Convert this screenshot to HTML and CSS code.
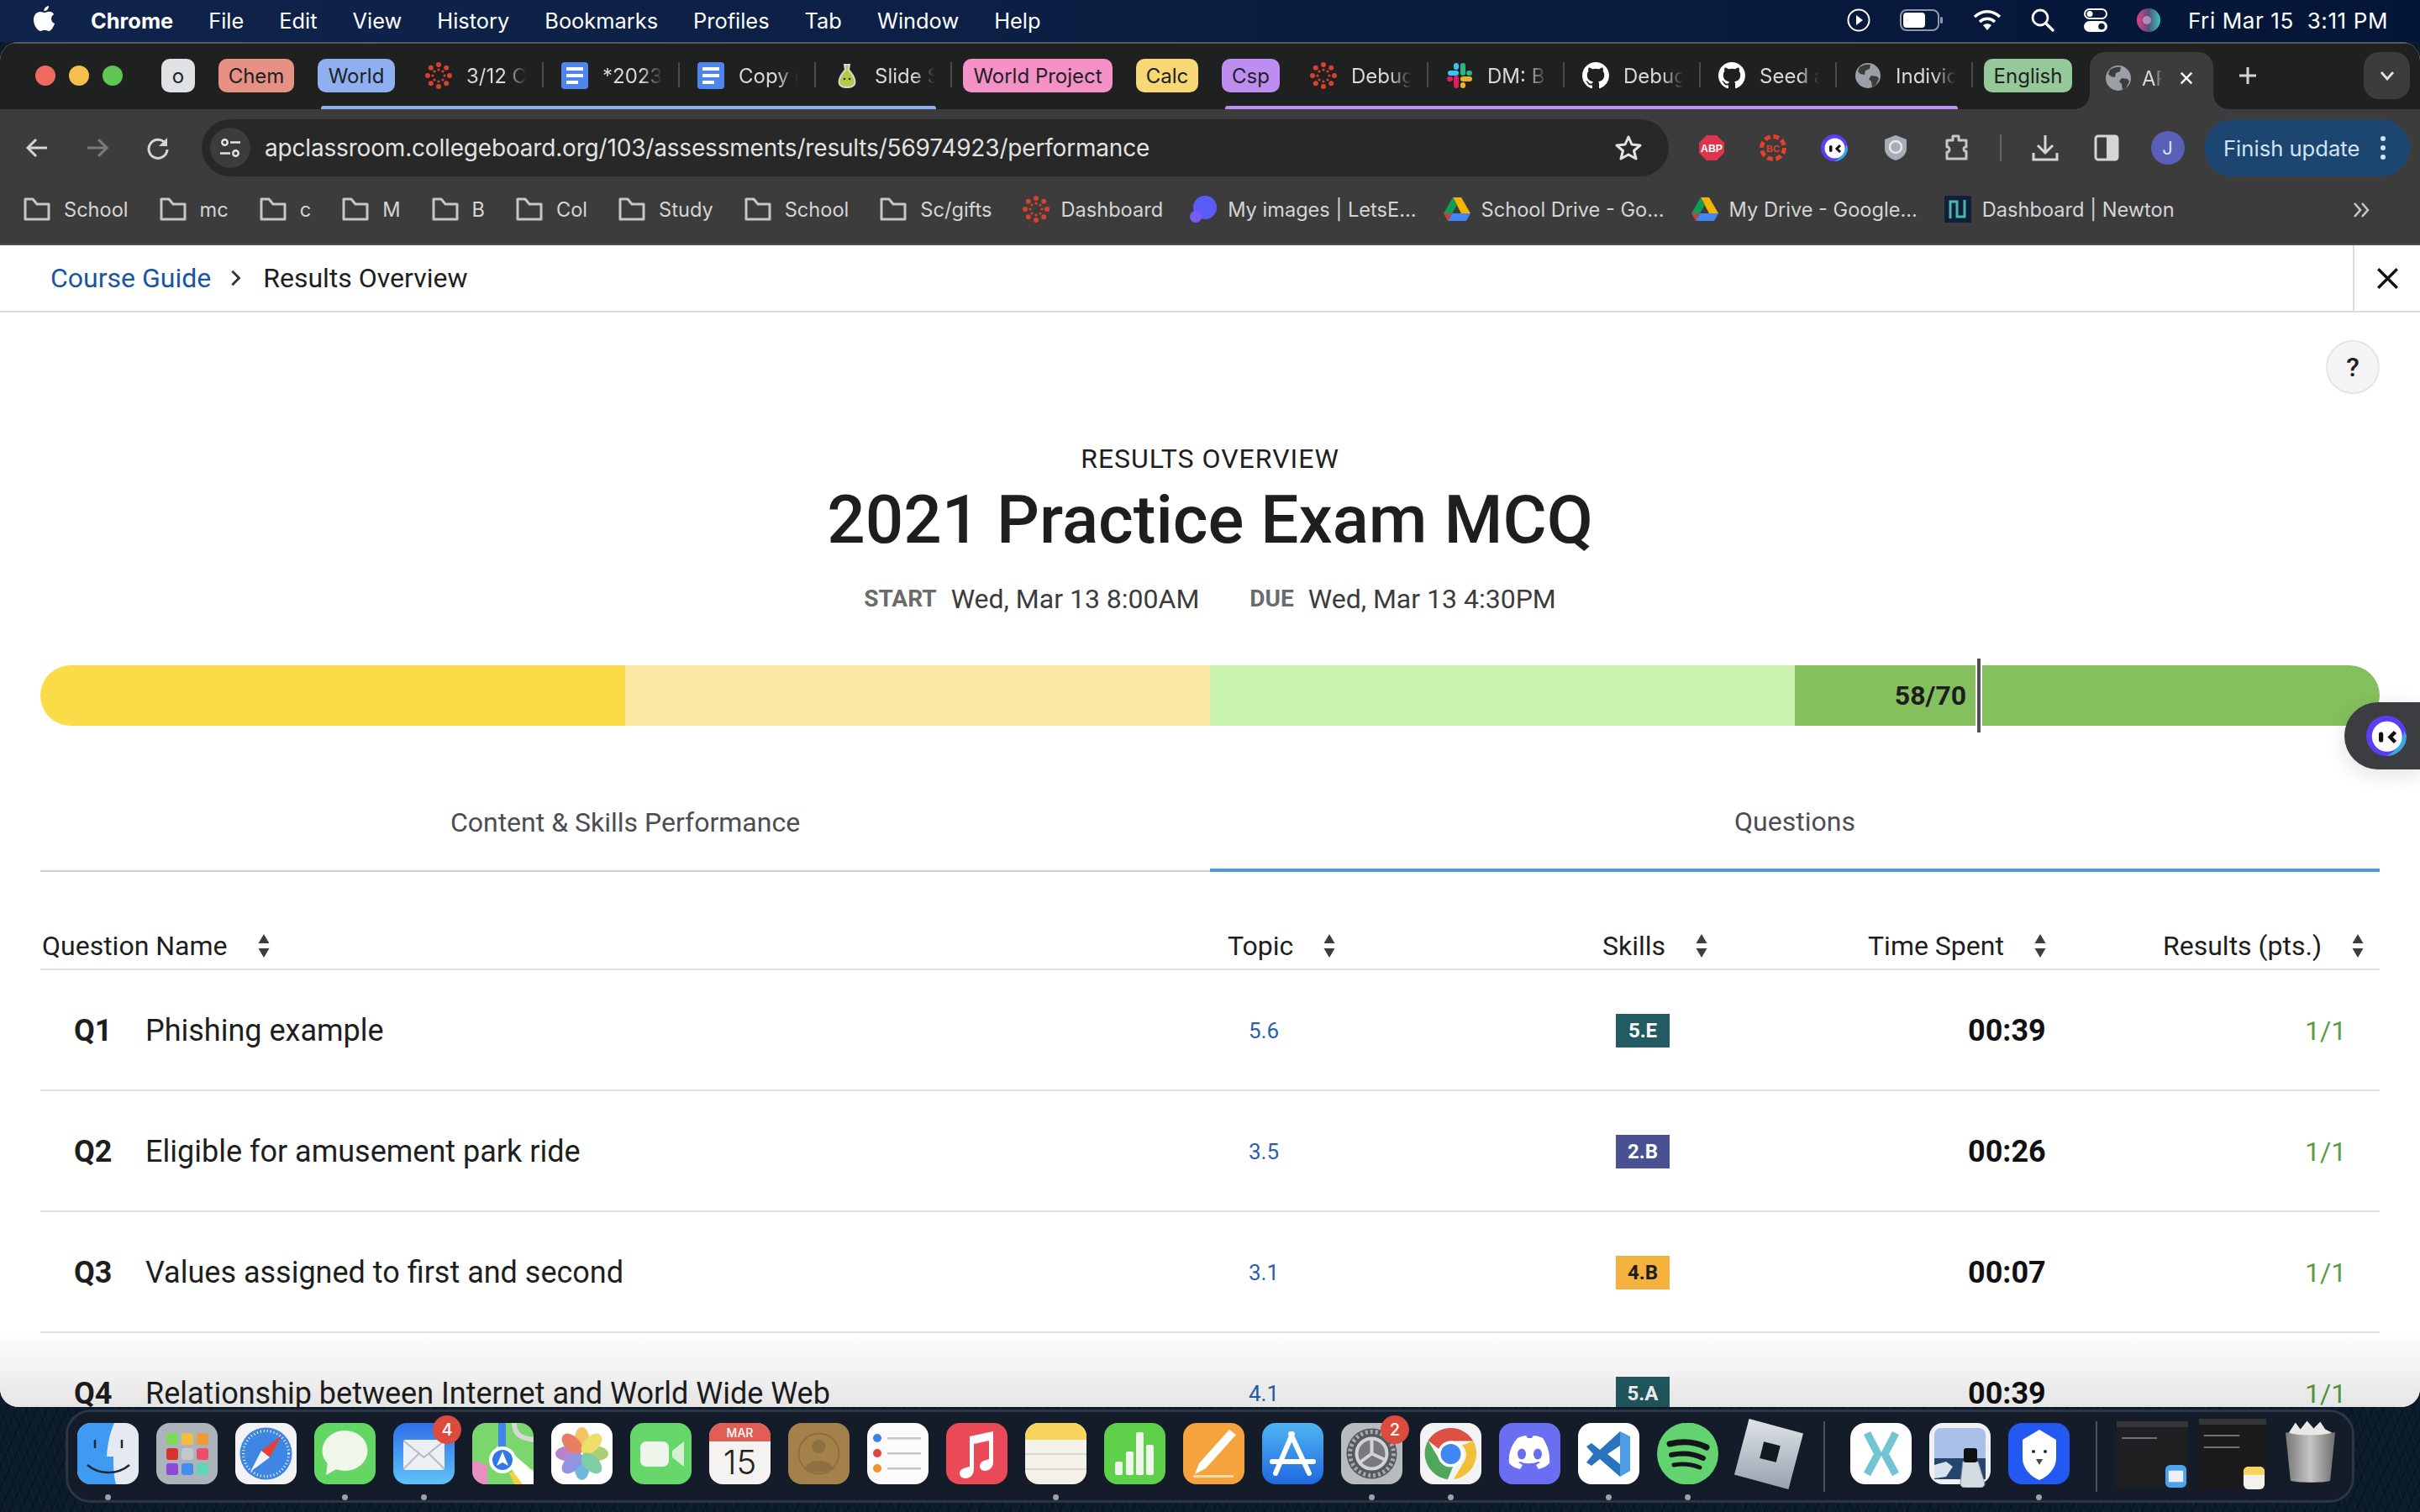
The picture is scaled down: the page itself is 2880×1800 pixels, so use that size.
FILE: index.html
```html
<!DOCTYPE html>
<html lang="en">
<head>
<meta charset="utf-8">
<title>Results Overview</title>
<link rel="stylesheet" href="styles.css">
</head>
<body>
<svg class="defs" width="0" height="0" aria-hidden="true">
  <defs>
    <symbol id="canvas" viewBox="0 0 32 32">
      <g fill="#d9402f">
        <circle cx="16" cy="3" r="3"/><circle cx="16" cy="29" r="3"/><circle cx="3" cy="16" r="3"/><circle cx="29" cy="16" r="3"/>
        <circle cx="6.8" cy="6.8" r="3"/><circle cx="25.2" cy="6.8" r="3"/><circle cx="6.8" cy="25.2" r="3"/><circle cx="25.2" cy="25.2" r="3"/>
        <circle cx="16" cy="9" r="1.6"/><circle cx="16" cy="23" r="1.6"/><circle cx="9" cy="16" r="1.6"/><circle cx="23" cy="16" r="1.6"/>
        <circle cx="11" cy="11" r="1.6"/><circle cx="21" cy="11" r="1.6"/><circle cx="11" cy="21" r="1.6"/><circle cx="21" cy="21" r="1.6"/>
      </g>
    </symbol>
    <symbol id="gdoc" viewBox="0 0 32 32">
      <rect width="32" height="32" rx="4" fill="#4f86ec"/>
      <rect x="6" y="6" width="20" height="4" fill="#fff"/><rect x="6" y="14" width="20" height="4" fill="#fff"/><rect x="6" y="22" width="14" height="4" fill="#fff"/>
    </symbol>
    <symbol id="github" viewBox="0 0 16 16">
      <path fill="#fff" d="M8 0C3.58 0 0 3.58 0 8c0 3.54 2.29 6.53 5.47 7.59.4.07.55-.17.55-.38 0-.19-.01-.82-.01-1.49-2.01.37-2.53-.49-2.69-.94-.09-.23-.48-.94-.82-1.13-.28-.15-.68-.52-.01-.53.63-.01 1.08.58 1.23.82.72 1.21 1.87.87 2.33.66.07-.52.28-.87.51-1.07-1.78-.2-3.64-.89-3.64-3.95 0-.87.31-1.59.82-2.15-.08-.2-.36-1.02.08-2.12 0 0 .67-.21 2.2.82.64-.18 1.32-.27 2-.27.68 0 1.36.09 2 .27 1.53-1.04 2.2-.82 2.2-.82.44 1.1.16 1.92.08 2.12.51.56.82 1.27.82 2.15 0 3.07-1.87 3.75-3.65 3.95.29.25.54.73.54 1.48 0 1.07-.01 1.93-.01 2.2 0 .21.15.46.55.38A8.013 8.013 0 0016 8c0-4.42-3.58-8-8-8z"/>
    </symbol>
    <symbol id="globe" viewBox="0 0 32 32">
      <circle cx="16" cy="16" r="15" fill="#9aa0a6"/>
      <path fill="#3c3c3c" d="M6 6c4-3 10-4 13-3l-1 5-5 2-1 5-5-1-3-3zM20 16l7 1 2 3-4 8-4 2-1-7-3-3z"/>
    </symbol>
    <symbol id="folder" viewBox="0 0 32 32">
      <path fill="none" stroke="#c4c7c5" stroke-width="3" stroke-linejoin="round" d="M2 28V4h9l5 6h14v18z"/>
    </symbol>
    <symbol id="drive" viewBox="0 0 32 30">
      <path fill="#f4b400" d="M11 1h10l11 19H21z"/><path fill="#0f9d58" d="M11 1L0 20h10l6-10z"/><path fill="#4285f4" d="M10 20h22l-5 9H5z"/><path fill="#db4437" d="M0 20l5 9 5-9z" opacity=".85"/>
    </symbol>
    <symbol id="sort" viewBox="0 0 16 28">
      <path fill="#3d3d3d" d="M8 0l6.5 11h-13zM1.500 17h13L8 28z"/>
    </symbol>
    <symbol id="monica" viewBox="0 0 32 32">
      <circle cx="16" cy="16" r="16" fill="#5b3df5"/><path fill="#39a8e0" d="M32 16a16 16 0 01-16 16c6-3 12-8 14-20z"/>
      <circle cx="16.500" cy="16.500" r="12" fill="#fff"/>
      <rect x="10" y="13" width="3.500" height="8" rx="1.700" fill="#111"/><path d="M23 13l-4 4 4 4" fill="none" stroke="#111" stroke-width="3"/>
    </symbol>
  </defs>
</svg>

<header class="menubar">
  <nav class="menu-left">
    <svg class="apple" viewBox="0 0 26 32"><path fill="#fff" d="M18 0c.3 3-2.400 6.300-5.600 6.100C12 3 15 .3 18 0zM13 8c1.500 0 3-1.300 5.500-1.300 2 0 4.300 1.100 5.700 3.200-4.700 2.700-3.900 9.300.9 11.200-1.200 3.300-4 8.900-7 8.900-1.800 0-2.700-1.200-4.900-1.200-2.300 0-3.200 1.200-4.900 1.200C4.800 30 0 23 0 16.700 0 10.500 4 7 7.600 7c2.200 0 4 1 5.400 1z"/></svg>
    <span class="menu-app">Chrome</span><span>File</span><span>Edit</span><span>View</span><span>History</span><span>Bookmarks</span><span>Profiles</span><span>Tab</span><span>Window</span><span>Help</span>
  </nav>
  <div class="menu-right">
    <svg class="mi" viewBox="0 0 28 28"><circle cx="14" cy="14" r="12.500" fill="none" stroke="#fff" stroke-width="2"/><path fill="#fff" d="M11 8l8 6-8 6z"/></svg>
    <svg class="mi mi-bat" viewBox="0 0 52 26"><rect x="1" y="1" width="45" height="24" rx="7" fill="none" stroke="#8f99ab" stroke-width="2"/><rect x="4" y="4" width="26" height="18" rx="4" fill="#fff"/><rect x="48" y="9" width="3" height="8" rx="1.500" fill="#8f99ab"/></svg>
    <svg class="mi mi-wifi" viewBox="0 0 34 26"><g fill="none" stroke="#fff" stroke-width="3.500"><path d="M2 9c9-8.500 21-8.500 30 0"/><path d="M8 15c5.500-5 12.500-5 18 0"/></g><path fill="#fff" d="M17 25l-5-6c3-2.500 7-2.500 10 0z"/></svg>
    <svg class="mi" viewBox="0 0 28 28"><circle cx="11" cy="11" r="9" fill="none" stroke="#fff" stroke-width="2.800"/><path stroke="#fff" stroke-width="3.200" stroke-linecap="round" d="M18 18l8 8"/></svg>
    <svg class="mi" viewBox="0 0 28 28"><rect x="1" y="1" width="26" height="11" rx="5.500" fill="none" stroke="#fff" stroke-width="2"/><circle cx="7" cy="6.500" r="3.500" fill="#fff"/><rect y="15" width="28" height="13" rx="6.500" fill="#fff"/><circle cx="21" cy="21.500" r="3.800" fill="#0a1c3e"/></svg>
    <svg class="mi" viewBox="0 0 28 28"><defs><linearGradient id="siri" x1="0" x2="1"><stop offset="0" stop-color="#e8417f"/><stop offset=".5" stop-color="#55507f"/><stop offset="1" stop-color="#3bc5b8"/></linearGradient></defs><circle cx="14" cy="14" r="14" fill="url(#siri)"/><circle cx="12" cy="14" r="5" fill="#d9b9d9" opacity=".6"/></svg>
    <span class="clock">Fri Mar 15&nbsp; 3:11 PM</span>
  </div>
</header>

<main class="window">
  <div class="tabstrip">
    <div class="lights"><i class="light l-red"></i><i class="light l-yellow"></i><i class="light l-green"></i></div>
    <span class="chip c-o">o</span>
    <span class="chip c-chem">Chem</span>
    <span class="chip c-world">World</span>
    <div class="tab"><svg class="fav"><use href="#canvas"/></svg><span class="tab-title">3/12 C</span></div>
    <div class="tab"><svg class="fav"><use href="#gdoc"/></svg><span class="tab-title">*2023</span></div>
    <div class="tab"><svg class="fav"><use href="#gdoc"/></svg><span class="tab-title">Copy o</span></div>
    <div class="tab"><svg class="fav" viewBox="0 0 32 32"><path fill="#b8c94a" stroke="#d8d8d8" stroke-width="2" d="M13 3h6l-1 6c4 5 9 11 7 17-1 3-5 4-9 4s-8-1-9-4c-2-6 3-12 7-17z"/><circle cx="13" cy="20" r="1.300" fill="#333"/><circle cx="19" cy="20" r="1.300" fill="#333"/></svg><span class="tab-title">Slide S</span></div>
    <span class="chip c-wp">World Project</span>
    <span class="chip c-calc">Calc</span>
    <span class="chip c-csp">Csp</span>
    <div class="tab"><svg class="fav"><use href="#canvas"/></svg><span class="tab-title">Debug</span></div>
    <div class="tab"><svg class="fav" viewBox="0 0 32 32"><g stroke-width="6" stroke-linecap="round" fill="none"><path stroke="#36c5f0" d="M5 13h7M12 4v2"/><path stroke="#2eb67d" d="M20 4v9M28 13h-1"/><path stroke="#ecb22e" d="M20 20h8M20 28v-1"/><path stroke="#e01e5a" d="M12 19v9M4 20h1"/></g></svg><span class="tab-title">DM: B</span></div>
    <div class="tab"><svg class="fav"><use href="#github"/></svg><span class="tab-title">Debug</span></div>
    <div class="tab"><svg class="fav"><use href="#github"/></svg><span class="tab-title">Seed a</span></div>
    <div class="tab"><svg class="fav"><use href="#globe"/></svg><span class="tab-title">Indivic</span></div>
    <span class="chip c-eng">English</span>
    <div class="tab-active"><svg class="fav"><use href="#globe"/></svg><span class="tab-title tab-title-a">AP</span>
      <svg class="tab-x" viewBox="0 0 20 20"><path stroke="#fff" stroke-width="2.600" d="M3 3l14 14M17 3L3 17"/></svg></div>
    <svg class="newtab" viewBox="0 0 22 22"><path stroke="#d5d5d5" stroke-width="3" d="M11 1v20M1 11h20"/></svg>
    <div class="tabmenu"><svg class="tabmenu-i" viewBox="0 0 18 12"><path fill="none" stroke="#e3e3e3" stroke-width="2.800" d="M2 2l7 8 7-8"/></svg></div>
    <i class="group-line gl-blue"></i><i class="group-line gl-purple"></i>
  </div>

  <div class="toolbar">
    <div class="nav-btn"><svg class="tool-i" viewBox="0 0 28 28"><path fill="none" stroke="#d5d5d5" stroke-width="3" d="M26 14H4M13 4L3 14l10 10"/></svg></div>
    <div class="nav-btn"><svg class="tool-i" viewBox="0 0 28 28"><path fill="none" stroke="#7b7b7b" stroke-width="3" d="M2 14h22M15 4l10 10-10 10"/></svg></div>
    <div class="nav-btn"><svg class="tool-i" viewBox="0 0 28 28"><path fill="none" stroke="#d5d5d5" stroke-width="3" d="M23 9a11 11 0 102 7"/><path fill="#d5d5d5" d="M25 2v10H15z"/></svg></div>
    <div class="omni">
      <span class="site-btn"><svg class="site-i" viewBox="0 0 28 28"><g fill="none" stroke="#e3e3e3" stroke-width="2.600"><circle cx="7" cy="7" r="3.500"/><circle cx="21" cy="21" r="3.500"/><path d="M14 7h13M1 21h13"/></g></svg></span>
      <span class="url">apclassroom.collegeboard.org/103/assessments/results/56974923/performance</span>
      <svg class="star" viewBox="0 0 32 32"><path fill="none" stroke="#e3e3e3" stroke-width="3" stroke-linejoin="round" d="M16 3l4 9 10 1-7.500 6.500L25 29l-9-5-9 5 2.500-9.500L2 13l10-1z"/></svg>
    </div>
    <div class="ext"><svg class="ext-i" viewBox="0 0 32 32"><path fill="#e0344c" d="M10 1h12l9 9v12l-9 9H10l-9-9V10z"/><text class="abp" x="16" y="21" textLength="26" lengthAdjust="spacingAndGlyphs">ABP</text></svg></div>
    <div class="ext"><svg class="ext-i" viewBox="0 0 32 32"><circle cx="16" cy="16" r="13.500" fill="none" stroke="#e6402d" stroke-width="5" stroke-dasharray="7 3.600"/><text class="bc" x="16" y="20.500">BC</text></svg></div>
    <div class="ext"><svg class="ext-i"><use href="#monica"/></svg></div>
    <div class="ext"><svg class="ext-i" viewBox="0 0 32 32"><path fill="#a6adb8" d="M16 1l13 5v11c0 7-6 12-13 14C9 29 3 24 3 17V6z"/><circle cx="16" cy="15" r="7" fill="none" stroke="#e8e8e8" stroke-width="2.500"/></svg></div>
    <div class="ext"><svg class="ext-i" viewBox="0 0 32 32"><path fill="none" stroke="#c7c7c7" stroke-width="3" stroke-linejoin="round" d="M4 7h7V2h7v5h9v8c-4-1-4 6 0 5v9H4v-8c4 1 4-7 0-6z"/></svg></div>
    <i class="tool-sep"></i>
    <div class="ext"><svg class="ext-i" viewBox="0 0 32 32"><path fill="none" stroke="#d5d5d5" stroke-width="3" d="M16 1v21M7 13l9 9 9-9M2 22v8h28v-8"/></svg></div>
    <div class="ext"><svg class="ext-i" viewBox="0 0 32 32"><rect x="3" y="2" width="26" height="28" rx="3" fill="none" stroke="#d5d5d5" stroke-width="3"/><rect x="16" y="2" width="13" height="28" fill="#d5d5d5"/></svg></div>
    <div class="ext"><span class="avatar">J</span></div>
    <div class="update"><span>Finish update</span><svg class="update-dots" viewBox="0 0 6 28"><g fill="#cfe3f7"><circle cx="3" cy="3" r="3"/><circle cx="3" cy="14" r="3"/><circle cx="3" cy="25" r="3"/></g></svg></div>
  </div>

  <div class="bookmarks">
    <span class="bm bm-f"><svg class="bm-i"><use href="#folder"/></svg>School</span>
    <span class="bm bm-f"><svg class="bm-i"><use href="#folder"/></svg>mc</span>
    <span class="bm bm-f"><svg class="bm-i"><use href="#folder"/></svg>c</span>
    <span class="bm bm-f"><svg class="bm-i"><use href="#folder"/></svg>M</span>
    <span class="bm bm-f"><svg class="bm-i"><use href="#folder"/></svg>B</span>
    <span class="bm bm-f"><svg class="bm-i"><use href="#folder"/></svg>Col</span>
    <span class="bm bm-f"><svg class="bm-i"><use href="#folder"/></svg>Study</span>
    <span class="bm bm-f"><svg class="bm-i"><use href="#folder"/></svg>School</span>
    <span class="bm bm-f"><svg class="bm-i"><use href="#folder"/></svg>Sc/gifts</span>
    <span class="bm bm-tight"><svg class="bm-i"><use href="#canvas"/></svg>Dashboard</span>
    <span class="bm bm-tight"><svg class="bm-i" viewBox="0 0 32 32"><circle cx="18" cy="14" r="14" fill="#5a5cf5"/><circle cx="7" cy="25" r="7" fill="#7a5cf5"/></svg>My images | LetsE...</span>
    <span class="bm bm-tight"><svg class="bm-i"><use href="#drive"/></svg>School Drive - Go...</span>
    <span class="bm bm-tight"><svg class="bm-i"><use href="#drive"/></svg>My Drive - Google...</span>
    <span class="bm bm-tight"><svg class="bm-i" viewBox="0 0 32 32"><rect width="32" height="32" fill="#11203a"/><path fill="none" stroke="#4bb7a8" stroke-width="3" d="M7 27V7h8v18h9V5"/></svg>Dashboard | Newton</span>
    <svg class="bm-more" viewBox="0 0 22 22"><path fill="none" stroke="#c7c7c7" stroke-width="2.500" d="M3 3l7 8-7 8M12 3l7 8-7 8"/></svg>
  </div>

  <section class="page">
    <div class="crumbs">
      <a class="crumb-link">Course Guide</a>
      <svg class="crumb-sep" viewBox="0 0 12 18"><path fill="none" stroke="#333" stroke-width="2.400" d="M2 2l7 7-7 7"/></svg>
      <span class="crumb-now">Results Overview</span>
      <div class="crumb-close"><svg class="close-i" viewBox="0 0 24 24"><path stroke="#111" stroke-width="3" d="M2 2l20 20M22 2L2 22"/></svg></div>
    </div>

    <div class="help-row"><span class="help">?</span></div>

    <div class="heading">
      <p class="eyebrow">RESULTS OVERVIEW</p>
      <h1 class="title">2021 Practice Exam MCQ</h1>
      <p class="dates"><b class="date-l">START</b><span class="date-v">Wed, Mar 13 8:00AM</span><b class="date-l date-l2">DUE</b><span class="date-v">Wed, Mar 13 4:30PM</span></p>
    </div>

    <div class="scorebar">
      <i class="seg s1"></i><i class="seg s2"></i><i class="seg s3"></i><i class="seg s4"></i>
      <div class="marker" style="left:82.8%"><b class="score">58/70</b></div>
    </div>

    <div class="tabs">
      <div class="ptab">Content &amp; Skills Performance</div>
      <div class="ptab ptab-on">Questions</div>
    </div>

    <div class="table">
      <div class="thead">
        <div class="th">Question Name<svg class="sort"><use href="#sort"/></svg></div>
        <div class="th">Topic<svg class="sort"><use href="#sort"/></svg></div>
        <div class="th">Skills<svg class="sort"><use href="#sort"/></svg></div>
        <div class="th">Time Spent<svg class="sort"><use href="#sort"/></svg></div>
        <div class="th">Results (pts.)<svg class="sort"><use href="#sort"/></svg></div>
      </div>
      <div class="row"><div class="c-name"><b class="qn">Q1</b>Phishing example</div><a class="c-topic">5.6</a><div class="c-skill"><span class="skill sk-teal">5.E</span></div><b class="c-time">00:39</b><div class="c-res">1/1</div></div>
      <div class="row"><div class="c-name"><b class="qn">Q2</b>Eligible for amusement park ride</div><a class="c-topic">3.5</a><div class="c-skill"><span class="skill sk-indigo">2.B</span></div><b class="c-time">00:26</b><div class="c-res">1/1</div></div>
      <div class="row"><div class="c-name"><b class="qn">Q3</b>Values assigned to first and second</div><a class="c-topic">3.1</a><div class="c-skill"><span class="skill sk-orange">4.B</span></div><b class="c-time">00:07</b><div class="c-res">1/1</div></div>
      <div class="row"><div class="c-name"><b class="qn">Q4</b>Relationship between Internet and World Wide Web</div><a class="c-topic">4.1</a><div class="c-skill"><span class="skill sk-teal">5.A</span></div><b class="c-time">00:39</b><div class="c-res">1/1</div></div>
    </div>

    <div class="fade"></div>
    <div class="widget"><svg class="widget-i"><use href="#monica"/></svg></div>
  </section>
</main>

<footer class="dock">
  <div class="app"><svg class="app-i" viewBox="0 0 73 73"><rect width="73" height="73" rx="16" fill="#e4e9f2"/><path fill="#3f9bf2" d="M16 0h28c-6 14-8 26-9 40h8c0 10 0 22 3 33H16A16 16 0 010 57V16A16 16 0 0116 0z"/><path stroke="#1c2838" stroke-width="2.500" d="M21 20v10M53 20v10"/><path fill="none" stroke="#1c2838" stroke-width="2.500" d="M12 50c14 12 36 12 50 0"/></svg><i class="dot"></i></div>
  <div class="app"><svg class="app-i" viewBox="0 0 73 73"><rect width="73" height="73" rx="16" fill="#adb3bb"/><g><rect x="12" y="12" width="14" height="14" rx="3" fill="#7ed957"/><rect x="30" y="12" width="14" height="14" rx="3" fill="#f4bd3d"/><rect x="48" y="12" width="14" height="14" rx="3" fill="#ef9a37"/><rect x="12" y="30" width="14" height="14" rx="3" fill="#d9322c"/><rect x="30" y="30" width="14" height="14" rx="3" fill="#c2c8cc"/><rect x="48" y="30" width="14" height="14" rx="3" fill="#ea5168"/><rect x="12" y="48" width="14" height="14" rx="3" fill="#8d47d9"/><rect x="30" y="48" width="14" height="14" rx="3" fill="#3f8ef0"/><rect x="48" y="48" width="14" height="14" rx="3" fill="#5fd6b5"/></g></svg></div>
  <div class="app"><svg class="app-i" viewBox="0 0 73 73"><rect width="73" height="73" rx="16" fill="#f3f3f3"/><circle cx="36.500" cy="36.500" r="31" fill="#3d86e4"/><circle cx="36.500" cy="36.500" r="27" fill="none" stroke="#fff" stroke-width="3" stroke-dasharray="1 3"/><path fill="#ea3f35" d="M55 15L31 33l10 8z"/><path fill="#f3f3f3" d="M18 58l13-25 10 8z"/></svg></div>
  <div class="app"><svg class="app-i" viewBox="0 0 73 73"><rect width="73" height="73" rx="16" fill="#63d663"/><ellipse cx="36.500" cy="33" rx="27" ry="24" fill="#eef7ea"/><path fill="#eef7ea" d="M16 46l-2 16 16-9z"/></svg><i class="dot"></i></div>
  <div class="app"><svg class="app-i" viewBox="0 0 73 73"><defs><linearGradient id="mail" x2="0" y2="1"><stop offset="0" stop-color="#2f6fe8"/><stop offset="1" stop-color="#5ec2fa"/></linearGradient></defs><rect width="73" height="73" rx="16" fill="url(#mail)"/><rect x="12" y="20" width="49" height="36" rx="3" fill="#eceff3"/><path fill="none" stroke="#b7bcc4" stroke-width="2" d="M12 21l24.500 20L61 21M12 55l19-19M61 55L42 36"/></svg><i class="dot"></i><span class="badge">4</span></div>
  <div class="app"><svg class="app-i" viewBox="0 0 73 73"><rect width="73" height="73" rx="16" fill="#7ad76e"/><path fill="#ea8fc6" d="M0 44l18 6v23H16A16 16 0 010 57z"/><path fill="#f6d13e" d="M50 73l-6-14 29-4v2a16 16 0 01-16 16z"/><path fill="#fff" d="M60 73L28 30l6-6 39 34v15z"/><path fill="#3f86ea" d="M31 0h9v30h-9z"/><path fill="none" stroke="#d7d7d7" stroke-width="6" d="M50 0c0 14 8 18 23 20"/><circle cx="36" cy="44" r="16" fill="#fff"/><circle cx="36" cy="44" r="12" fill="#2f78e6"/><path fill="#fff" d="M36 34l7 17-7-4-7 4z"/></svg></div>
  <div class="app"><svg class="app-i" viewBox="0 0 73 73"><rect width="73" height="73" rx="16" fill="#fff"/><g opacity=".78"><ellipse cx="36.500" cy="20" rx="9" ry="15" fill="#f3b33c"/><ellipse cx="36.500" cy="53" rx="9" ry="15" fill="#4aa3d9"/><ellipse cx="20" cy="36.500" rx="15" ry="9" fill="#a660c0"/><ellipse cx="53" cy="36.500" rx="15" ry="9" fill="#94c24c"/><ellipse cx="25" cy="25" rx="9" ry="15" fill="#e25b37" transform="rotate(-45 25 25)"/><ellipse cx="48" cy="25" rx="9" ry="15" fill="#e9d53e" transform="rotate(45 48 25)"/><ellipse cx="25" cy="48" rx="9" ry="15" fill="#7378d8" transform="rotate(45 25 48)"/><ellipse cx="48" cy="48" rx="9" ry="15" fill="#5cc08c" transform="rotate(-45 48 48)"/></g></svg></div>
  <div class="app"><svg class="app-i" viewBox="0 0 73 73"><rect width="73" height="73" rx="16" fill="#66d76b"/><rect x="12" y="22" width="34" height="30" rx="7" fill="#eef6ec"/><path fill="#d5f0d3" d="M50 33l14-11v30L50 41z"/></svg></div>
  <div class="app"><svg class="app-i" viewBox="0 0 73 73"><rect width="73" height="73" rx="16" fill="#f5f3f1"/><path fill="#e05e53" d="M16 0h41a16 16 0 0116 16v6H0v-6A16 16 0 0116 0z"/><text class="cal-m" x="36.500" y="17">MAR</text><text class="cal-d" x="36.500" y="61">15</text></svg></div>
  <div class="app"><svg class="app-i" viewBox="0 0 73 73"><rect width="73" height="73" rx="16" fill="#a4814a"/><circle cx="36.500" cy="36.500" r="24" fill="none" stroke="#8d6f40" stroke-width="2"/><circle cx="36.500" cy="28" r="8" fill="#8d6f40"/><path fill="#8d6f40" d="M20 54c3-12 30-12 33 0-8 6-25 6-33 0z"/></svg></div>
  <div class="app"><svg class="app-i" viewBox="0 0 73 73"><rect width="73" height="73" rx="16" fill="#fbfbfb"/><circle cx="12" cy="18" r="5" fill="#3d82ea"/><circle cx="12" cy="36" r="5" fill="#e4443a"/><circle cx="12" cy="54" r="5" fill="#ee9327"/><g fill="#c5c5c5"><rect x="24" y="17" width="40" height="2.500"/><rect x="24" y="35" width="40" height="2.500"/><rect x="24" y="53" width="40" height="2.500"/></g></svg></div>
  <div class="app"><svg class="app-i" viewBox="0 0 73 73"><rect width="73" height="73" rx="16" fill="#ea4a58"/><path fill="#fff" d="M28 16l28-6v37c0 6-5 10-10 10-4 0-6-3-6-6s3-6 8-7l3-1V21l-18 4v30c0 7-5 11-10 11-4 0-7-3-7-6 0-4 4-6 8-7l4-1z"/></svg></div>
  <div class="app"><svg class="app-i" viewBox="0 0 73 73"><rect width="73" height="73" rx="16" fill="#f3f1ea"/><path fill="#f7d55c" d="M16 0h41a16 16 0 0116 16v4H0v-4A16 16 0 0116 0z"/><g fill="#d8d6cf"><rect y="36" width="73" height="2"/><rect y="54" width="73" height="2"/></g></svg><i class="dot"></i></div>
  <div class="app"><svg class="app-i" viewBox="0 0 73 73"><rect width="73" height="73" rx="16" fill="#5ed04a"/><g fill="#eef7ea"><rect x="13" y="46" width="9" height="16" rx="2"/><rect x="26" y="34" width="9" height="28" rx="2"/><rect x="38" y="11" width="9" height="51" rx="2"/><rect x="50" y="26" width="9" height="36" rx="2"/></g></svg></div>
  <div class="app"><svg class="app-i" viewBox="0 0 73 73"><rect width="73" height="73" rx="16" fill="#f5a33c"/><path fill="#fff" d="M55 8l8 6-36 40-13 7 5-13z"/><rect x="12" y="62" width="48" height="3" fill="#fbd9a8"/></svg></div>
  <div class="app"><svg class="app-i" viewBox="0 0 73 73"><defs><linearGradient id="store" x2="0" y2="1"><stop offset="0" stop-color="#4fb5f2"/><stop offset="1" stop-color="#2068e0"/></linearGradient></defs><rect width="73" height="73" rx="16" fill="url(#store)"/><path stroke="#fff" stroke-width="6" stroke-linecap="round" d="M36 13L16 60M34 13l22 47M12 46h49"/></svg></div>
  <div class="app"><svg class="app-i" viewBox="0 0 73 73"><rect width="73" height="73" rx="16" fill="#b9bcbf"/><circle cx="36.500" cy="36.500" r="30" fill="#555a5e"/><circle cx="36.500" cy="36.500" r="26" fill="none" stroke="#a8abad" stroke-width="5" stroke-dasharray="3 3"/><circle cx="36.500" cy="36.500" r="18" fill="#77797c" stroke="#d2d3d4" stroke-width="4"/><path stroke="#d2d3d4" stroke-width="4" d="M36.500 36.500V18M36.500 36.500l17 8M36.500 36.500l-15 11"/></svg><i class="dot"></i><span class="badge">2</span></div>
  <div class="app"><svg class="app-i" viewBox="0 0 73 73"><rect width="73" height="73" rx="16" fill="#f3f3f3"/><path fill="#dd5144" d="M36.500 6a31 31 0 0126.800 15.500H36.500a15 15 0 00-14 9.500L9.600 21A31 31 0 0136.500 6z"/><path fill="#f2c037" d="M63.300 21.500A31 31 0 0140 67l13-22a15 15 0 00-3-18.500z"/><path fill="#4ea75a" d="M9.600 21l13 22a15 15 0 0017 8L33 67A31 31 0 019.600 21z"/><circle cx="36.500" cy="37" r="15.500" fill="#fff"/><circle cx="36.500" cy="37" r="12" fill="#4285f4"/></svg><i class="dot"></i></div>
  <div class="app"><svg class="app-i" viewBox="0 0 73 73"><rect width="73" height="73" rx="16" fill="#6a6ef0"/><path fill="#fff" d="M22 18c4-2 8-3 10-3l2 3h5l2-3c3 0 7 1 11 3 6 9 9 19 8 30-4 4-9 6-13 7l-3-5 5-3-2-1c-8 3-16 3-22 0l-2 1 5 3-3 5c-5-1-9-3-13-7-1-11 2-21 10-30z"/><ellipse cx="27" cy="37" rx="5" ry="6.500" fill="#6a6ef0"/><ellipse cx="46" cy="37" rx="5" ry="6.500" fill="#6a6ef0"/></svg></div>
  <div class="app"><svg class="app-i" viewBox="0 0 73 73"><rect width="73" height="73" rx="16" fill="#fff"/><path fill="#2a74bd" d="M10 28l6-4 10 8 24-22v17L35 37 50 49v15L26 43l-10 8-6-4 8-10z"/><path fill="#4e9de6" d="M50 10l12 6v41l-12 7z"/></svg><i class="dot"></i></div>
  <div class="app"><svg class="app-i" viewBox="0 0 73 73"><ellipse cx="36.500" cy="36.500" rx="36.500" ry="37" fill="#62d36e"/><g fill="none" stroke="#12161a" stroke-linecap="round"><path stroke-width="7" d="M15 25c16-4 30-3 44 4"/><path stroke-width="6" d="M17 38c14-3 26-2 38 4"/><path stroke-width="5" d="M20 50c11-2 21-1 31 3"/></g></svg><i class="dot"></i></div>
  <div class="app app-roblox"><svg class="app-i" viewBox="0 0 84 86"><defs><linearGradient id="rb" x2="0" y2="1"><stop offset="0" stop-color="#dfe3e8"/><stop offset="1" stop-color="#96a2ae"/></linearGradient></defs><path fill="url(#rb)" d="M18 0l66 18-18 68L0 68z"/><path fill="#11181f" d="M36 28l20 5-5 20-20-5z"/></svg></div>
  <i class="dock-sep"></i>
  <div class="app"><svg class="app-i" viewBox="0 0 73 73"><rect width="73" height="73" rx="18" fill="#fff"/><path fill="none" stroke="#72c4d2" stroke-width="9" d="M20 12l13 25-13 24M54 12L41 37l13 24"/></svg></div>
  <div class="app app-preview"><svg class="app-i" viewBox="0 0 73 77"><rect width="73" height="73" rx="16" fill="#f1f1f1"/><rect x="6" y="6" width="61" height="61" rx="8" fill="#a8c0ea"/><path fill="#26456d" d="M6 42h61v25H6z"/><path fill="#d8e3ee" d="M6 50l14-4 8 6-8 12-14 2z"/><path fill="#d4dbe3" stroke="#8e969e" d="M40 46h18l8 26a5 5 0 01-5 5H42a5 5 0 01-5-5z"/><rect x="41" y="30" width="16" height="17" rx="3" fill="#111"/></svg></div>
  <div class="app"><svg class="app-i" viewBox="0 0 73 73"><rect width="73" height="73" rx="16" fill="#2458f3"/><path fill="#fff" d="M37 8l20 12v22c0 12-10 22-20 26-10-4-20-14-20-26V20z"/><circle cx="30" cy="34" r="2" fill="#1a2b4b"/><circle cx="44" cy="34" r="2" fill="#1a2b4b"/><path fill="#445" d="M33 43h8l-4 7z"/></svg><i class="dot"></i></div>
  <i class="dock-sep dock-sep2"></i>
  <div class="thumb"><div class="thumb-bar"></div><i class="thumb-line"></i><svg class="thumb-app" viewBox="0 0 26 28"><rect width="26" height="28" rx="6" fill="#4aa5ef"/><rect x="4" y="7" width="18" height="14" fill="#eceff3"/></svg></div>
  <div class="thumb thumb2"><div class="thumb-bar"></div><i class="thumb-line"></i><i class="thumb-line"></i><svg class="thumb-app" viewBox="0 0 26 28"><rect width="26" height="28" rx="6" fill="#f3f1ea"/><path fill="#f7d55c" d="M0 10V6a6 6 0 016-6h14a6 6 0 016 6v4z"/></svg></div>
  <svg class="trash" viewBox="0 0 64 76"><defs><linearGradient id="bin" x2="1"><stop offset="0" stop-color="#777"/><stop offset=".5" stop-color="#c5c5c5"/><stop offset="1" stop-color="#6e6e6e"/></linearGradient></defs><path fill="url(#bin)" d="M2 14h60l-6 58c-1 3-44 3-48 0z"/><path fill="#e8e8e8" d="M6 14l8-12 6 8 8-10 8 9 8-8 6 9 8 4c-10 4-44 4-52 0z"/></svg>
</footer>
</body>
</html>
```

FILE: styles.css
```css
* { box-sizing: border-box; }
html, body { margin: 0; height: 100%; }
body {
  width: 2880px; height: 1800px; overflow: hidden;
  display: flex; flex-direction: column;
  font-family: "Roboto", "Liberation Sans", sans-serif;
  background-color: #0b1b2c;
  background-image:
    repeating-linear-gradient(72deg, rgba(60,90,120,.10) 0 1px, transparent 1px 7px),
    repeating-linear-gradient(115deg, rgba(0,0,0,.25) 0 2px, transparent 2px 11px);
}
.defs { position: absolute; }

/* menu bar */
.menubar {
  height: 50px; flex: none; padding: 0 38px 2px 40px;
  display: flex; align-items: center; justify-content: space-between;
  background: linear-gradient(90deg, #10234b, #0b1e42 50%, #031638);
  color: #fff; font: 25.4px "Inter", "Liberation Sans", sans-serif;
}
.menu-left { display: flex; align-items: center; gap: 42px; }
.apple { width: 26px; height: 32px; margin-bottom: 2px; }
.menu-app { font-weight: 700; }
.menu-right { display: flex; align-items: center; gap: 35px; }
.mi { width: 28px; height: 28px; }
.mi-bat { width: 52px; height: 26px; }
.mi-wifi { width: 34px; height: 26px; }
.clock { margin-left: -2px; font-size: 26px; letter-spacing: .6px; }

/* window */
.window {
  height: 1625px; flex: none; display: flex; flex-direction: column; position: relative;
  border-radius: 22px; overflow: hidden; background: #fff;
}
.tabstrip {
  height: 80px; flex: none; display: flex; align-items: center; position: relative;
  background: #1f2020; color: #d9d9d9; padding-left: 178px;
  font: 24px "Inter", "Liberation Sans", sans-serif;
  border-top: 2px solid #585858;
}
.lights { position: absolute; left: 42px; top: 26px; display: flex; gap: 16px; }
.light { width: 24px; height: 24px; border-radius: 50%; }
.l-red { background: #ef6a5e; }
.l-yellow { background: #f5bf4f; }
.l-green { background: #61c554; }
.chip {
  height: 40px; margin: 0 14px 2px; border-radius: 10px; color: #202124;
  display: flex; align-items: center; justify-content: center; flex: none; white-space: nowrap;
}
.c-o { width: 40px; background: #dfe1e5; }
.c-chem { width: 90px; background: #e69184; }
.c-world { width: 92px; background: #8fb0f0; }
.c-wp { width: 178px; background: #f491c7; }
.c-calc { width: 74px; background: #f8d775; }
.c-csp { width: 69px; background: #bd8ef0; }
.c-eng { width: 105px; background: #95c99a; }
.tab {
  width: 162px; height: 48px; flex: none; margin-bottom: 2px; padding-left: 22px;
  display: flex; align-items: center; position: relative;
}
.tab::after { content: ""; position: absolute; right: -1px; top: 8px; width: 2px; height: 30px; background: #4a4a4a; }
.fav { width: 32px; height: 32px; flex: none; }
.tab-title {
  margin-left: 17px; width: 84px; white-space: nowrap;
  -webkit-mask-image: linear-gradient(90deg, #000 55%, transparent 85%);
  mask-image: linear-gradient(90deg, #000 55%, transparent 85%);
}
.tab-active {
  width: 147px; height: 68px; margin-left: 7px; flex: none; align-self: flex-end; padding: 0 0 6px 18px;
  display: flex; align-items: center; background: #3c3c3c; border-radius: 18px 18px 0 0; position: relative;
}
.tab-active::before, .tab-active::after {
  content: ""; position: absolute; bottom: 0; width: 18px; height: 18px;
}
.tab-active::before { left: -18px; background: radial-gradient(circle at 0 0, transparent 17.500px, #3c3c3c 18px); }
.tab-active::after { right: -18px; background: radial-gradient(circle at 100% 0, transparent 17.500px, #3c3c3c 18px); }
.tab-title-a { margin-left: 12px; width: 32px; -webkit-mask-image: linear-gradient(90deg, #000 45%, transparent 75%); mask-image: linear-gradient(90deg, #000 45%, transparent 75%); }
.tab-x { width: 18px; height: 18px; margin-left: 12px; flex: none; }
.newtab { width: 22px; height: 22px; margin: 0 0 2px 30px; flex: none; }
.tabmenu {
  width: 55px; height: 56px; margin: 0 12px 2px auto; border-radius: 18px; background: #3c3c3c;
  display: flex; align-items: center; justify-content: center; flex: none;
}
.tabmenu-i { width: 18px; height: 12px; }
.group-line { position: absolute; bottom: 0; height: 4px; border-radius: 3px 3px 0 0; }
.gl-blue { left: 382px; width: 732px; background: #8fb0f0; }
.gl-purple { left: 1458px; width: 872px; background: #bd8ef0; }

.toolbar {
  height: 80px; flex: none; display: flex; align-items: flex-start; padding: 12px 0 0 8px;
  background: #3c3c3c;
}
.nav-btn { width: 72px; height: 68px; flex: none; display: flex; align-items: center; justify-content: center; }
.tool-i { width: 28px; height: 28px; }
.omni {
  width: 1746px; height: 68px; margin: 0 14px 0 16px; padding: 0 32px 0 10px; flex: none;
  display: flex; align-items: center; border-radius: 34px; background: #282828;
}
.site-btn {
  width: 48px; height: 48px; border-radius: 50%; background: #3c3c3c; flex: none;
  display: flex; align-items: center; justify-content: center;
}
.site-i { width: 26px; height: 26px; }
.url {
  margin-left: 15px; flex: 1; color: #e3e3e3; white-space: nowrap; padding-left: 2px;
  font: 28px "Inter", "Liberation Sans", sans-serif; letter-spacing: -.18px;
}
.star { width: 32px; height: 32px; flex: none; }
.ext { width: 73px; height: 68px; flex: none; display: flex; align-items: center; justify-content: center; }
.ext-i { width: 32px; height: 32px; }
.abp { font: 700 13px "Liberation Sans", sans-serif; fill: #fff; text-anchor: middle; }
.bc { font: 700 11px "Liberation Sans", sans-serif; fill: #e6402d; text-anchor: middle; }
.tool-sep { width: 2px; height: 32px; margin: 18px 15px 0; background: #666; flex: none; }
.avatar {
  width: 40px; height: 40px; border-radius: 50%; background: #5a60b8; color: #dfe1f5;
  display: flex; align-items: center; justify-content: center;
  font: 22px "Inter", sans-serif;
}
.update {
  width: 245px; height: 68px; margin-left: 7px; padding: 0 29px 0 23px; flex: none;
  display: flex; align-items: center; justify-content: space-between;
  border-radius: 34px; background: #1c4670; color: #cfe3f7;
  font: 25.6px "Inter", "Liberation Sans", sans-serif;
}
.update-dots { width: 6px; height: 28px; }

.bookmarks {
  height: 82px; flex: none; display: flex; align-items: center; padding: 0 0 2px 28px; gap: 36px; position: relative;
  background: #3c3c3c; color: #d5d5d5; white-space: nowrap;
  font: 23.6px "Inter", "Liberation Sans", sans-serif;
  border-bottom: 2px solid #4d4d4d;
}
.bm { display: flex; align-items: center; gap: 16px; flex: none; }
.bm-f { margin-right: 1px; }
.bm-tight { gap: 13px; }
.bm-tight + .bm-tight { margin-left: -4px; }
.bm-i { width: 32px; height: 32px; flex: none; }
.bm-more { width: 22px; height: 22px; position: absolute; left: 2799px; top: 29px; }

/* page */
.page { flex: 1; min-height: 0; background: #fff; position: relative; overflow: hidden; color: #1e1e1e; padding: 0 48px; }
.crumbs {
  height: 80px; margin: 0 -48px; padding-left: 60px; display: flex; align-items: center;
  border-bottom: 2px solid #dcdcdc; font-size: 32px;
}
.crumb-link { color: #1a55a5; }
.crumb-sep { width: 14px; height: 22px; margin: 0 25px 0 23px; }
.crumb-now { color: #1e1e1e; }
.crumb-close {
  width: 80px; height: 100%; margin-left: auto; border-left: 2px solid #dcdcdc;
  display: flex; align-items: center; justify-content: center;
}
.close-i { width: 27px; height: 27px; }
.help-row { display: flex; justify-content: flex-end; padding: 33px 0 0; height: 97px; }
.help {
  width: 64px; height: 64px; border-radius: 50%; background: #f5f5f5; border: 2px solid #e6e6e6;
  display: flex; align-items: center; justify-content: center; font-weight: 500; font-size: 32px;
}
.heading { text-align: center; height: 323px; }
.eyebrow { margin: 0 0 7px; font-size: 32px; line-height: 40px; padding-top: 57px; letter-spacing: 1px; }
.title { margin: 0; font-size: 80px; font-weight: 500; line-height: 92px; }
.dates { margin: 26px 0 0; display: flex; justify-content: center; align-items: center; font-size: 32px; line-height: 44px; color: #3c3c3c; }
.date-l { font-size: 28px; font-weight: 700; color: #6b6b6b; margin-right: 17px; }
.date-l2 { margin-left: 60px; }
.scorebar { height: 72px; display: flex; position: relative; }
.seg { flex: 1; }
.s1 { background: #f9dc47; border-radius: 36px 0 0 36px; }
.s2 { background: #fce9a6; }
.s3 { background: #c9f3ad; }
.s4 { background: #84c05d; border-radius: 0 36px 36px 0; }
.marker {
  position: absolute; top: -8px; bottom: -8px; width: 4px; background: #4f4f55;
  box-shadow: -2px 0 0 #fff, 2px 0 0 #fff;
}
.score { position: absolute; right: 17px; top: 24px; font-size: 32px; line-height: 40px; color: #1e1e1e; font-weight: 700; }
.tabs { display: flex; height: 174px; }
.ptab {
  flex: 1; display: flex; align-items: center; justify-content: center; padding-top: 58px;
  height: 174px; color: #4c4c55; font-size: 32px; border-bottom: 2px solid #cfcfcf;
}
.ptab-on { border-bottom: 4px solid #5499d1; }
.thead, .row { display: grid; grid-template-columns: 1413px 446px 316px 351px 258px; }
.thead { height: 117px; padding-top: 60px; border-bottom: 2px solid #e3e3e3; }
.th { display: flex; align-items: center; height: 56px; font-size: 32px; color: #1e1e1e; padding-left: 2px; }
.th:nth-child(n+2) { padding-left: 0; }
.sort { width: 16px; height: 28px; margin-left: 35px; }
.row { height: 144px; align-items: center; border-bottom: 2px solid #e3e3e3; padding-top: 2px; }
.c-name { display: flex; align-items: baseline; padding-left: 40px; font-size: 36px; }
.qn { width: 85px; font-weight: 700; }
.c-topic { padding-left: 25px; color: #2a5fb0; font-size: 26px; }
.c-skill { padding-left: 16px; display: flex; }
.skill {
  width: 64px; height: 40px; display: flex; align-items: center; justify-content: center;
  color: #fff; font-weight: 700; font-size: 24px;
}
.sk-teal { background: #235b63; }
.sk-indigo { background: #4a5193; }
.sk-orange { background: #f4b13e; color: #1e1e1e; }
.c-time { padding-left: 119px; font-size: 36px; font-weight: 700; color: #111; }
.c-res { padding-left: 169px; font-size: 32px; color: #5a9e44; }
.fade {
  position: absolute; left: 0; right: 0; bottom: 0; height: 90px; pointer-events: none;
  background: linear-gradient(rgba(0,0,0,0), rgba(0,0,0,.1));
}
.widget {
  position: absolute; right: 0; top: 544px; width: 90px; height: 80px;
  border-radius: 40px 0 0 40px; background: #3c3d40; padding-left: 26px;
  display: flex; align-items: center; box-shadow: 0 6px 24px rgba(0,0,0,.12);
}
.widget-i { width: 48px; height: 48px; }

/* dock */
.dock {
  position: relative; width: 2724px; height: 111px; margin: 3px 0 0 78px; flex: none; padding: 13px 0 0 11px;
  display: flex; align-items: flex-start; gap: 21px;
  background: #131c28; border: 3px solid #2b3543; border-radius: 30px;
}
.app { width: 73px; height: 73px; flex: none; position: relative; }
.app-i { width: 100%; height: 100%; display: block; }
.app-roblox { width: 82px; height: 86px; margin: -6px 0 0 -2px; }
.app-preview { height: 77px; }
.dot { position: absolute; left: 33px; top: 85px; width: 7px; height: 7px; border-radius: 50%; background: #98a1ac; }
.badge {
  position: absolute; left: 47px; top: -9px; width: 34px; height: 34px; border-radius: 50%;
  background: #de4a3c; color: #fff; font: 500 20px "Inter", sans-serif;
  display: flex; align-items: center; justify-content: center;
}
.cal-m { font: 500 14px "Inter", sans-serif; fill: #fff; text-anchor: middle; }
.cal-d { font: 300 40px "Inter", sans-serif; fill: #222; text-anchor: middle; }
.dock-sep { width: 2px; height: 84px; margin: -2px 9px 0 3px; background: #4a5360; flex: none; }
.dock-sep2 { margin-left: 10px; margin-right: 2px; }
.thumb { width: 85px; height: 80px; padding-top: 1px; background: #1f2021; position: relative; flex: none; margin-top: -3px; display: flex; flex-direction: column; gap: 12px; }
.thumb2 { width: 80px; height: 85px; margin-left: -8px; margin-top: -6px; background: #1b1b1b; }
.thumb-bar { height: 7px; background: #33353a; }
.thumb-line { display: block; height: 2px; width: 42px; margin-left: 6px; background: #6f7278; }
.thumb-app { position: absolute; right: 0; bottom: 0; width: 29px; height: 27px; }
.trash { width: 63px; height: 76px; flex: none; margin-top: -3px; }
```
